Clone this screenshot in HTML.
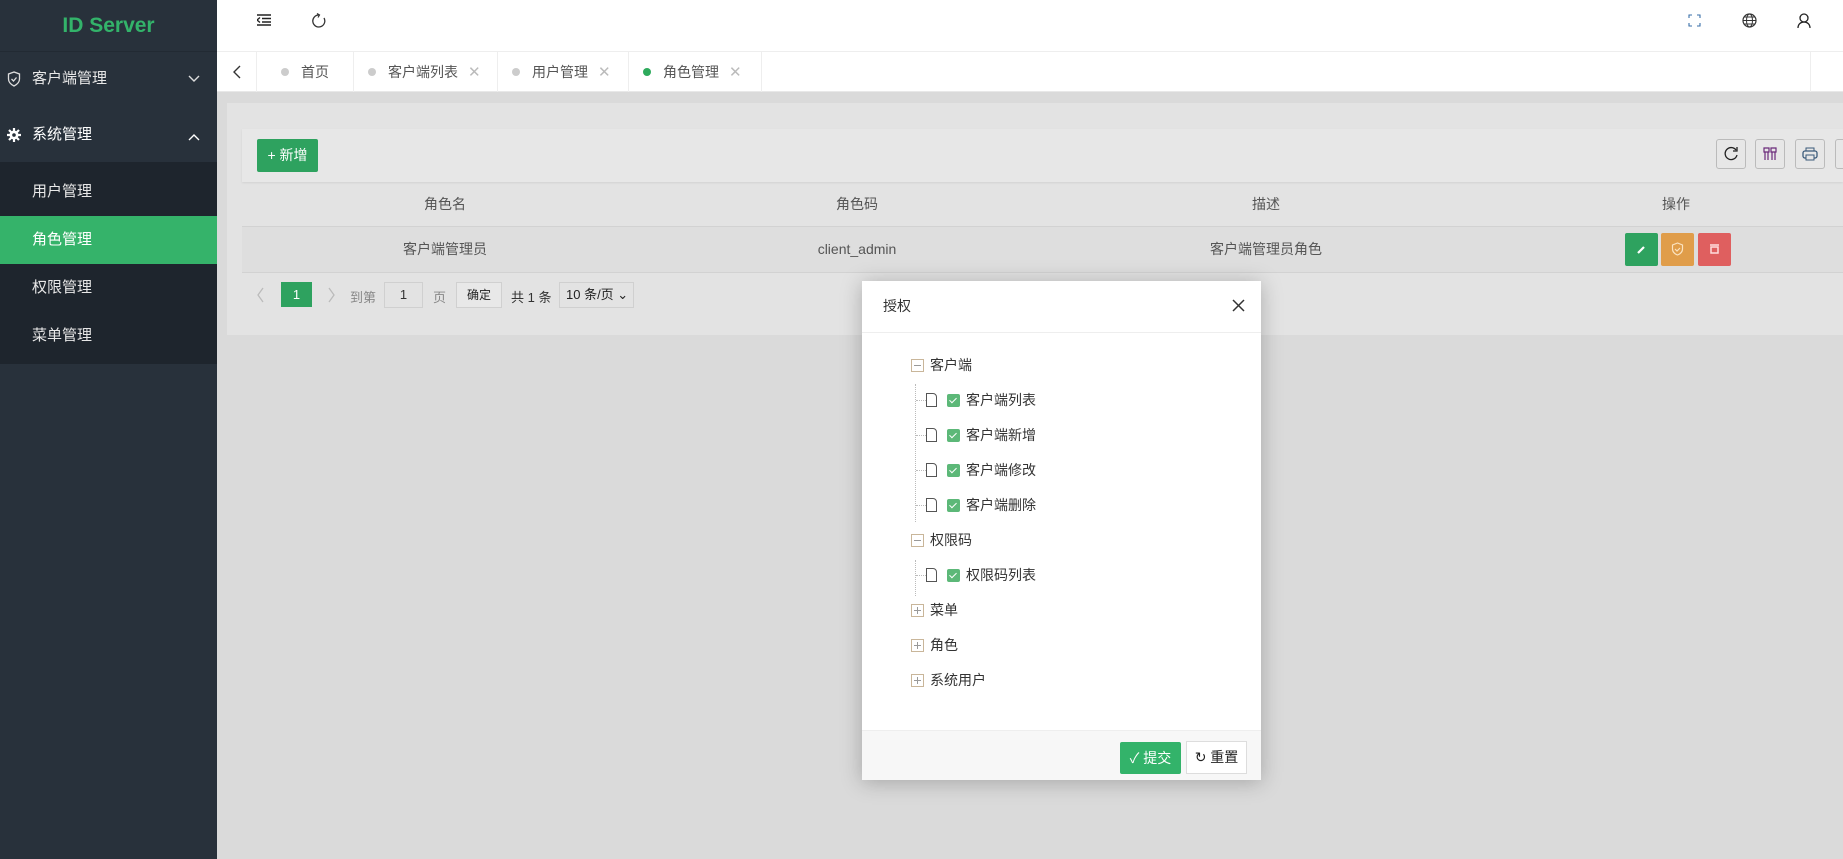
<!DOCTYPE html>
<html><head><meta charset="utf-8"><style>
*{box-sizing:border-box;margin:0;padding:0}
body{width:1843px;height:859px;overflow:hidden;background:#dadada;font-family:"Liberation Sans","Noto Sans CJK SC",sans-serif;font-size:14px;color:#333;position:relative}
.abs{position:absolute}
.side{left:0;top:0;width:217px;height:859px;background:#28313b}
.logo{left:0;top:0;width:217px;height:52px;line-height:52px;text-align:center;color:#33b36a;font-weight:bold;font-size:21px;border-bottom:1px solid #222a33}
.mi{left:0;width:217px;color:#e8e8e8;font-size:15px;padding-left:32px}
.sub{left:0;top:162px;width:217px;height:202px;background:#1e252d}
.hdr{left:217px;top:0;width:1626px;height:52px;background:#fff;border-bottom:1px solid #eee}
.tabs{left:217px;top:52px;width:1626px;height:40px;background:#fff;border-bottom:1px solid #e8e8e8}
.tab{top:52px;height:40px;line-height:40px;border-right:1px solid #eee;color:#555;font-size:14px}
.dot{display:inline-block;width:8px;height:8px;border-radius:50%;background:#ccc;margin-right:12px;vertical-align:1px}
.x{color:#bbb;margin-left:10px;font-size:15px}
.card{left:227px;top:103px;width:1616px;height:232px;background:#e3e3e3}
.tb{left:242px;top:129px;width:1601px;height:53px;background:#e7e7e7;box-shadow:0 1px 2px rgba(0,0,0,.08)}
.th{top:182px;height:44px;line-height:44px;color:#555;text-align:center;width:200px}
.td{top:226px;height:46px;line-height:46px;color:#555;text-align:center;width:200px}
.ibtn{top:139px;width:30px;height:30px;border:1px solid #bbb;border-radius:3px;background:#e7e7e7}
.ab{top:233px;width:33px;height:33px;border-radius:2px}
.modal{left:862px;top:281px;width:399px;height:499px;background:#fff;box-shadow:0 2px 20px rgba(0,0,0,.25)}
.ti{left:49px;height:20px;line-height:20px;font-size:14px;color:#333}
.box{display:inline-block;width:13px;height:13px;border:1px solid #c9b69a;position:relative;vertical-align:-2px;margin-right:6px;background:#fff}
.chk{display:inline-block;width:13px;height:13px;background:#5cb878;border-radius:2px;vertical-align:-2px;margin-right:6px;position:relative}
.chk::after{content:"";position:absolute;left:4px;top:2px;width:3px;height:6px;border:solid #fff;border-width:0 1.5px 1.5px 0;transform:rotate(45deg)}
.file{display:inline-block;width:11px;height:14px;border:1px solid #555;vertical-align:-2px;margin-right:10px;border-top-right-radius:4px}
</style></head><body>
<div class="abs side"></div>
<div class="abs logo">ID Server</div>
<div class="abs mi" style="top:67px;height:24px;line-height:24px">客户端管理</div>
<svg class="abs" style="left:7px;top:71px" width="14" height="16" viewBox="0 0 14 16"><path d="M7 1L1.5 3v5c0 3.5 2.5 5.5 5.5 7 3-1.5 5.5-3.5 5.5-7V3z" fill="none" stroke="#ddd" stroke-width="1.3"/><path d="M4.5 8l2 2 3-3.5" fill="none" stroke="#ddd" stroke-width="1.3"/></svg>
<svg class="abs" style="left:188px;top:75px" width="12" height="8"><path d="M1 1l5 5 5-5" fill="none" stroke="#ddd" stroke-width="1.4"/></svg>
<div class="abs mi" style="top:123px;height:24px;line-height:24px;color:#fff">系统管理</div>
<svg class="abs" style="left:7px;top:128px" width="14" height="14" viewBox="0 0 14 14"><circle cx="7" cy="7" r="4.5" fill="#fff"/><path d="M7 0v14M0 7h14M2 2l10 10M12 2L2 12" stroke="#fff" stroke-width="2.2"/><circle cx="7" cy="7" r="1.8" fill="#28313b"/></svg>
<svg class="abs" style="left:188px;top:133px" width="12" height="8"><path d="M1 7l5-5 5 5" fill="none" stroke="#fff" stroke-width="1.4"/></svg>
<div class="abs sub"></div>
<div class="abs mi" style="top:168px;height:48px;line-height:48px">用户管理</div>
<div class="abs mi" style="top:216px;height:48px;line-height:48px;background:#35b36a;color:#fff">角色管理</div>
<div class="abs mi" style="top:264px;height:48px;line-height:48px">权限管理</div>
<div class="abs mi" style="top:312px;height:48px;line-height:48px">菜单管理</div>

<div class="abs hdr"></div>
<svg class="abs" style="left:257px;top:14px" width="14" height="12"><path d="M0 1h14M5 4.5h9M5 8h9M0 11h14M3 3.5L0 6l3 2.5" fill="none" stroke="#222" stroke-width="1.4"/></svg>
<svg class="abs" style="left:312px;top:13px" width="14" height="15"><path d="M7 2A6 6 0 1 0 12 5" fill="none" stroke="#333" stroke-width="1.3"/><path d="M5 0.5L7.5 2 6 4.5" fill="none" stroke="#333" stroke-width="1.2"/></svg>
<svg class="abs" style="left:1688px;top:14px" width="13" height="13"><path d="M1 4V1h3M9 1h3v3M12 9v3H9M4 12H1V9" fill="none" stroke="#3a6fa8" stroke-width="1.1"/></svg>
<svg class="abs" style="left:1742px;top:13px" width="15" height="15"><circle cx="7.5" cy="7.5" r="6.5" fill="none" stroke="#333" stroke-width="1.2"/><ellipse cx="7.5" cy="7.5" rx="3" ry="6.5" fill="none" stroke="#333"/><path d="M1 7.5h13M2 4h11M2 11h11" stroke="#333"/></svg>
<svg class="abs" style="left:1797px;top:13px" width="14" height="15"><circle cx="7" cy="5" r="4" fill="none" stroke="#222" stroke-width="1.3"/><path d="M1 15c0-4 3-6 6-6s6 2 6 6" fill="none" stroke="#222" stroke-width="1.3"/></svg>

<div class="abs tabs"></div>
<div class="abs tab" style="left:217px;width:40px;text-align:center"><svg width="10" height="14" style="vertical-align:-2px"><path d="M8 1L2 7l6 6" fill="none" stroke="#333" stroke-width="1.4"/></svg></div>
<div class="abs tab" style="left:257px;width:97px;padding-left:24px"><span class="dot"></span>首页</div>
<div class="abs tab" style="left:354px;width:144px;padding-left:14px"><span class="dot"></span>客户端列表<span class="x">✕</span></div>
<div class="abs tab" style="left:498px;width:131px;padding-left:14px"><span class="dot"></span>用户管理<span class="x">✕</span></div>
<div class="abs tab" style="left:629px;width:133px;padding-left:14px"><span class="dot" style="background:#2eaa5c"></span>角色管理<span class="x">✕</span></div>
<div class="abs" style="left:1810px;top:52px;width:1px;height:40px;background:#eee"></div>

<div class="abs card"></div>
<div class="abs tb"></div>
<div class="abs" style="left:257px;top:139px;width:61px;height:33px;background:#2ea25f;color:#fff;line-height:33px;text-align:center;border-radius:2px;font-size:14px">+ 新增</div>
<div class="abs ibtn" style="left:1716px"><svg width="28" height="28"><path d="M19 10A6 6 0 1 0 20 15" fill="none" stroke="#222" stroke-width="1.3"/><path d="M20 7v4h-4" fill="none" stroke="#222" stroke-width="1.3"/></svg></div>
<div class="abs ibtn" style="left:1755px"><svg width="28" height="28"><path d="M8 8h5v4H8zM15 8h5v4h-5zM9 12v8M12 12v8M16 12v8M19 12v8" fill="none" stroke="#6a2a7a" stroke-width="1.2"/></svg></div>
<div class="abs ibtn" style="left:1795px"><svg width="28" height="28"><rect x="7" y="11" width="14" height="7" rx="2" fill="none" stroke="#3a5a7a" stroke-width="1.3"/><rect x="10" y="8" width="8" height="3" fill="none" stroke="#3a5a7a"/><rect x="10" y="15" width="8" height="5" fill="#e7e7e7" stroke="#3a5a7a"/></svg></div>
<div class="abs ibtn" style="left:1835px"></div>
<div class="abs" style="left:242px;top:226px;width:1601px;height:1px;background:#d2d2d2"></div>
<div class="abs" style="left:242px;top:227px;width:1601px;height:45px;background:#dedede"></div>
<div class="abs" style="left:242px;top:272px;width:1601px;height:1px;background:#d2d2d2"></div>
<div class="abs th" style="left:345px">角色名</div>
<div class="abs th" style="left:757px">角色码</div>
<div class="abs th" style="left:1166px">描述</div>
<div class="abs th" style="left:1576px">操作</div>
<div class="abs td" style="left:345px">客户端管理员</div>
<div class="abs td" style="left:757px">client_admin</div>
<div class="abs td" style="left:1166px">客户端管理员角色</div>
<div class="abs ab" style="left:1625px;background:#2ea25f"><svg width="33" height="33"><path d="M13 20l6-6" stroke="#fff" stroke-width="2.2"/></svg></div>
<div class="abs ab" style="left:1661px;background:#e09d4a"><svg width="33" height="33"><path d="M16.5 10l-5 2v4c0 3 2.5 5 5 6 2.5-1 5-3 5-6v-4z" fill="none" stroke="#fbe3c0" stroke-width="1.2"/><path d="M14 16l2 2 3-3" fill="none" stroke="#fbe3c0" stroke-width="1.2"/></svg></div>
<div class="abs ab" style="left:1698px;background:#df5f5f"><svg width="33" height="33"><path d="M12 12h9M13 14h7v6h-7z" fill="none" stroke="#fdd" stroke-width="1.5"/></svg></div>
<svg class="abs" style="left:256px;top:287px" width="10" height="16"><path d="M7 1L2 8l5 7" fill="none" stroke="#bbb" stroke-width="1.3"/></svg>
<div class="abs" style="left:281px;top:282px;width:31px;height:25px;background:#2ea25f;color:#fff;text-align:center;line-height:25px;font-size:13px">1</div>
<svg class="abs" style="left:326px;top:287px" width="10" height="16"><path d="M3 1l5 7-5 7" fill="none" stroke="#bbb" stroke-width="1.3"/></svg>
<div class="abs" style="left:350px;top:287px;color:#888;font-size:13px">到第</div>
<div class="abs" style="left:384px;top:282px;width:39px;height:26px;border:1px solid #d0d0d0;text-align:center;line-height:24px;font-size:13px">1</div>
<div class="abs" style="left:433px;top:287px;color:#888;font-size:13px">页</div>
<div class="abs" style="left:456px;top:282px;width:46px;height:26px;border:1px solid #d0d0d0;background:#e8e8e8;text-align:center;line-height:24px;font-size:12px;color:#222">确定</div>
<div class="abs" style="left:511px;top:287px;font-size:13px;color:#333">共 1 条</div>
<div class="abs" style="left:559px;top:282px;width:75px;height:26px;border:1px solid #d0d0d0;line-height:24px;font-size:13px;padding-left:6px;color:#222">10 条/页 ⌄</div>

<div class="abs modal"></div>
<div class="abs" style="left:883px;top:296px;font-size:14px;color:#333">授权</div>
<svg class="abs" style="left:1232px;top:299px" width="13" height="13"><path d="M1 1l11 11M12 1L1 12" stroke="#333" stroke-width="1.5"/></svg>
<div class="abs" style="left:862px;top:332px;width:399px;height:1px;background:#eee"></div>
<div class="abs" style="left:862px;top:730px;width:399px;height:50px;background:#f7f7f7;border-top:1px solid #eee"></div>
<div class="abs" style="left:1120px;top:742px;width:61px;height:32px;background:#33b36a;color:#fff;line-height:32px;text-align:center;font-size:14px;border-radius:2px">✓ 提交</div>
<div class="abs" style="left:1186px;top:741px;width:61px;height:33px;border:1px solid #ddd;background:#fff;line-height:31px;text-align:center;font-size:14px;color:#222">↻ 重置</div>
<div class="abs" style="left:915px;top:384px;width:0;height:138px;border-left:1px dotted #bbb"></div>
<div class="abs" style="left:915px;top:560px;width:0;height:36px;border-left:1px dotted #bbb"></div>
<div class="abs ti" style="left:911px;top:355px"><span class="box"><i style="position:absolute;left:2px;right:2px;top:5px;height:1px;background:#999"></i></span>客户端</div>
<div class="abs ti" style="left:916px;top:390px"><i style="display:inline-block;width:10px;border-top:1px dotted #bbb;vertical-align:4px"></i><span class="file"></span><span class="chk"></span>客户端列表</div>
<div class="abs ti" style="left:916px;top:425px"><i style="display:inline-block;width:10px;border-top:1px dotted #bbb;vertical-align:4px"></i><span class="file"></span><span class="chk"></span>客户端新增</div>
<div class="abs ti" style="left:916px;top:460px"><i style="display:inline-block;width:10px;border-top:1px dotted #bbb;vertical-align:4px"></i><span class="file"></span><span class="chk"></span>客户端修改</div>
<div class="abs ti" style="left:916px;top:495px"><i style="display:inline-block;width:10px;border-top:1px dotted #bbb;vertical-align:4px"></i><span class="file"></span><span class="chk"></span>客户端删除</div>
<div class="abs ti" style="left:911px;top:530px"><span class="box"><i style="position:absolute;left:2px;right:2px;top:5px;height:1px;background:#999"></i></span>权限码</div>
<div class="abs ti" style="left:916px;top:565px"><i style="display:inline-block;width:10px;border-top:1px dotted #bbb;vertical-align:4px"></i><span class="file"></span><span class="chk"></span>权限码列表</div>
<div class="abs ti" style="left:911px;top:600px"><span class="box"><i style="position:absolute;left:2px;right:2px;top:5px;height:1px;background:#999"></i><i style="position:absolute;top:2px;bottom:2px;left:5px;width:1px;background:#999"></i></span>菜单</div>
<div class="abs ti" style="left:911px;top:635px"><span class="box"><i style="position:absolute;left:2px;right:2px;top:5px;height:1px;background:#999"></i><i style="position:absolute;top:2px;bottom:2px;left:5px;width:1px;background:#999"></i></span>角色</div>
<div class="abs ti" style="left:911px;top:670px"><span class="box"><i style="position:absolute;left:2px;right:2px;top:5px;height:1px;background:#999"></i><i style="position:absolute;top:2px;bottom:2px;left:5px;width:1px;background:#999"></i></span>系统用户</div>
</body></html>
